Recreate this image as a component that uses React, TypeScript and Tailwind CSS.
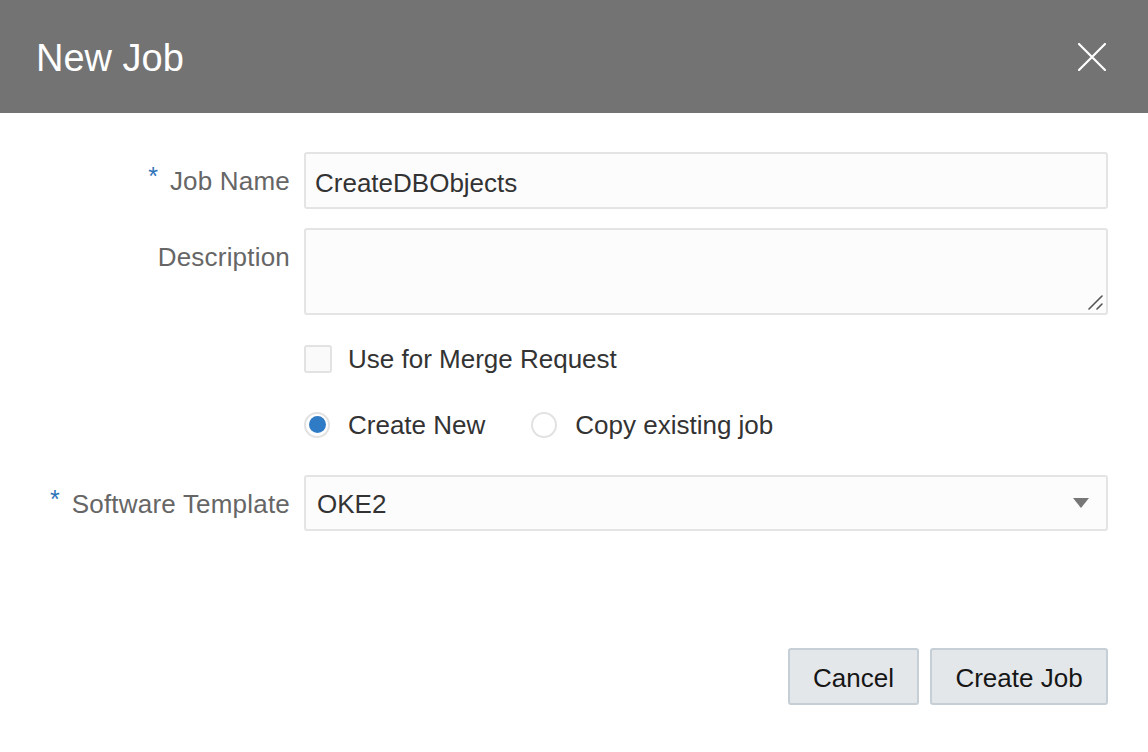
import React, { useState } from 'react';

const font = { fontFamily: '"Liberation Sans", Arial, sans-serif' };

const Label = ({ text, required }: { text: string; required?: boolean }) => (
  <div className="flex h-[57px] items-center justify-end pr-[14px] pt-[2px] text-[26px] text-[#666666]">
    {required && (
      <span className="mr-[12px] -mt-[10px] text-[25px] text-[#2f73b8]">*</span>
    )}
    <span className="tracking-[0.2px]">{text}</span>
  </div>
);

const Radio = ({ checked, label }: { checked: boolean; label: string }) => (
  <label className="flex items-center gap-[18px] cursor-pointer">
    <span className="flex h-[26px] w-[26px] items-center justify-center rounded-full border-2 border-[#e2e2e2] bg-white">
      {checked && <span className="h-[17px] w-[17px] rounded-full bg-[#2f7bc6]" />}
    </span>
    <span className="pt-[2px] text-[26px] text-[#333333]">{label}</span>
  </label>
);

export default function App() {
  const [mode, setMode] = useState('new');

  return (
    <div className="flex h-[752px] w-full flex-col bg-white" style={font}>
      {/* Header */}
      <div className="flex h-[113px] items-center justify-between bg-[#737373] pl-[36px] pr-[42px]">
        <h1 className="pt-[3px] text-[38px] text-white">New Job</h1>
        <button className="text-white">
          <svg width="28" height="28" viewBox="0 0 28 28" fill="none">
            <path d="M1 1L27 27M27 1L1 27" stroke="white" strokeWidth="2.2" strokeLinecap="round" />
          </svg>
        </button>
      </div>

      {/* Form */}
      <div className="grid grid-cols-[304px_1fr] pr-[40px] pt-[39px]">
        <Label text="Job Name" required />
        <input
          defaultValue="CreateDBObjects"
          className="h-[57px] rounded-[3px] border-2 border-[#e4e4e4] bg-[#fcfcfc] px-[9px] pt-[5px] text-[26px] text-[#333333] outline-none"
        />

        <div className="mt-[19px]">
          <Label text="Description" />
        </div>
        <div className="relative mt-[19px] h-[87px]">
          <textarea className="h-full w-full resize-none rounded-[3px] border-2 border-[#e4e4e4] bg-[#fcfcfc] px-[9px] py-[8px] text-[26px] text-[#333333] outline-none" />
          <svg className="absolute bottom-[5px] right-[5px]" width="15" height="15" viewBox="0 0 15 15">
            <path d="M1 14L14 1M9 14L14 9" stroke="#555555" strokeWidth="1.6" strokeLinecap="round" />
          </svg>
        </div>

        <div />
        <div className="mt-[15px] flex h-[57px] items-center gap-[16px]">
          <span className="h-[28px] w-[28px] rounded-[3px] border-2 border-[#e2e2e2] bg-[#fafafa]" />
          <span className="pt-[2px] text-[26px] text-[#333333]">Use for Merge Request</span>
        </div>

        <div />
        <div className="mt-[9px] flex h-[57px] items-center gap-[46px]">
          <div onClick={() => setMode('new')}>
            <Radio checked={mode === 'new'} label="Create New" />
          </div>
          <div onClick={() => setMode('copy')}>
            <Radio checked={mode === 'copy'} label="Copy existing job" />
          </div>
        </div>

        <div className="mt-[22px]">
          <Label text="Software Template" required />
        </div>
        <div className="mt-[22px] flex h-[56px] items-center justify-between rounded-[3px] border-2 border-[#e4e4e4] bg-[#fcfcfc] pl-[11px] pr-[17px]">
          <span className="pt-[3px] text-[26px] text-[#333333]">OKE2</span>
          <svg width="16" height="10" viewBox="0 0 16 10">
            <path d="M0 0H16L8 10Z" fill="#777777" />
          </svg>
        </div>
      </div>

      {/* Footer */}
      <div className="mt-auto flex justify-end gap-[11px] pb-[47px] pr-[40px]">
        <button className="h-[57px] w-[131px] rounded-[3px] border-2 border-[#c7cfd6] bg-[#e4e7ea] pt-[3px] text-[26px] text-[#161616]">
          Cancel
        </button>
        <button className="h-[57px] w-[178px] rounded-[3px] border-2 border-[#c7cfd6] bg-[#e4e7ea] pt-[3px] text-[26px] text-[#161616]">
          Create Job
        </button>
      </div>
    </div>
  );
}
